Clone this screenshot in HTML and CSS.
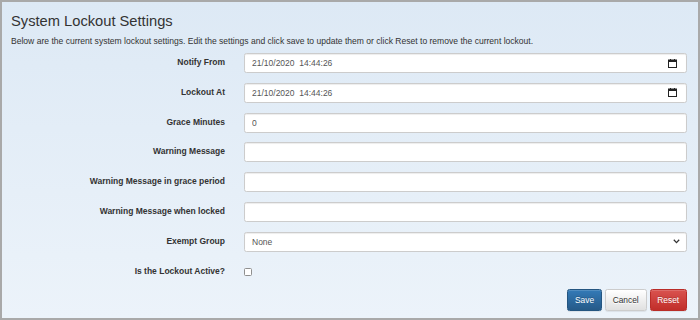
FILE: index.html
```html
<!DOCTYPE html>
<html lang="en">
<head>
    <meta charset="UTF-8">
    <meta name="viewport" content="width=device-width, initial-scale=1.0">
    <title>System Lockout Settings</title>
    <link rel="stylesheet" href="styles.css">
</head>
<body>
    <div class="panel">
        <h3 class="title">System Lockout Settings</h3>
        <p class="intro">Below are the current system lockout settings. Edit the settings and click save to update them or click Reset to remove the current lockout.</p>

        <form class="settings" action="#" method="POST">
            <div class="form-group">
                <label class="control-label">Notify From</label>
                <div class="form-control date">
                    <input type="text" name="notify_from" value="21/10/2020  14:44:26">
                    <svg class="cal-icon" width="9" height="9" viewBox="0 0 9 9">
                        <rect x="0.5" y="1" width="8" height="7.5" fill="none" stroke="#222" stroke-width="1"/>
                        <rect x="0.5" y="1" width="8" height="2" fill="#222"/>
                        <rect x="2" y="0" width="1" height="1.5" fill="#222"/>
                        <rect x="6" y="0" width="1" height="1.5" fill="#222"/>
                    </svg>
                </div>
            </div>
            <div class="form-group">
                <label class="control-label">Lockout At</label>
                <div class="form-control date">
                    <input type="text" name="lockout_at" value="21/10/2020  14:44:26">
                    <svg class="cal-icon" width="9" height="9" viewBox="0 0 9 9">
                        <rect x="0.5" y="1" width="8" height="7.5" fill="none" stroke="#222" stroke-width="1"/>
                        <rect x="0.5" y="1" width="8" height="2" fill="#222"/>
                        <rect x="2" y="0" width="1" height="1.5" fill="#222"/>
                        <rect x="6" y="0" width="1" height="1.5" fill="#222"/>
                    </svg>
                </div>
            </div>
            <div class="form-group">
                <label class="control-label">Grace Minutes</label>
                <div class="form-control">
                    <input type="text" name="grace_minutes" value="0">
                </div>
            </div>
            <div class="form-group">
                <label class="control-label">Warning Message</label>
                <div class="form-control">
                    <input type="text" name="warning_message">
                </div>
            </div>
            <div class="form-group">
                <label class="control-label">Warning Message in grace period</label>
                <div class="form-control">
                    <input type="text" name="warning_grace">
                </div>
            </div>
            <div class="form-group">
                <label class="control-label">Warning Message when locked</label>
                <div class="form-control">
                    <input type="text" name="warning_locked">
                </div>
            </div>
            <div class="form-group">
                <label class="control-label">Exempt Group</label>
                <div class="form-control select">
                    <select name="exempt_group">
                        <option>None</option>
                    </select>
                    <svg class="chevron" width="7" height="5" viewBox="0 0 7 5">
                        <path d="M0.8 0.8 L3.5 3.6 L6.2 0.8" fill="none" stroke="#333" stroke-width="1.3"/>
                    </svg>
                </div>
            </div>
            <div class="form-group check-row">
                <label class="control-label">Is the Lockout Active?</label>
                <div class="check-wrap">
                    <input type="checkbox" name="active">
                </div>
            </div>

            <div class="actions">
                <button type="submit" class="btn btn-primary">Save</button>
                <button type="button" class="btn btn-default">Cancel</button>
                <button type="button" class="btn btn-danger">Reset</button>
            </div>
        </form>
    </div>
</body>
</html>
```

FILE: styles.css
```css
* {
    margin: 0;
    padding: 0;
    box-sizing: border-box;
    font-family: 'Liberation Sans', Arial, Helvetica, sans-serif;
}

body {
    background: #ffffff;
}

.panel {
    width: 700px;
    height: 320px;
    border: 2px solid #a9a9a9;
    background: linear-gradient(to bottom, #dde9f5, #ecf3fa);
    padding: 10.6px 9px 0 9px;
    color: #333;
}

.title {
    font-size: 14.7px;
    line-height: 1.1;
    font-weight: normal;
    margin-bottom: 6px;
}

.intro {
    font-size: 8.55px;
    line-height: 12px;
    margin-bottom: 6.3px;
}

.settings {
    width: 676px;
}

.form-group {
    display: grid;
    grid-template-columns: 214px 443px;
    column-gap: 19px;
    margin-bottom: 9.8px;
    align-items: start;
}

.control-label {
    font-size: 8.5px;
    line-height: 12px;
    font-weight: bold;
    text-align: right;
    padding-top: 3px;
}

.form-control {
    height: 20px;
    display: flex;
    align-items: center;
    background: #fff;
    border: 1px solid #ccc;
    border-radius: 2.4px;
    box-shadow: inset 0 1px 1px rgba(0, 0, 0, 0.075);
    padding: 0 7px;
}

.form-control input,
.form-control select {
    flex: 1;
    border: none;
    outline: none;
    background: transparent;
    font-size: 8.5px;
    color: #555;
    height: 100%;
    appearance: none;
    -webkit-appearance: none;
}

.cal-icon {
    margin-right: 2px;
}

.chevron {
    margin-right: -1px;
}

.check-row {
    height: 18px;
}

.check-wrap {
    padding-top: 6.7px;
}

.check-wrap input {
    appearance: none;
    -webkit-appearance: none;
    display: block;
    width: 8px;
    height: 8px;
    border: 1px solid #8f8f8f;
    border-radius: 1.5px;
    background: #fff;
}

.actions {
    display: flex;
    justify-content: flex-end;
    gap: 3px;
}

.btn {
    font-size: 8.4px;
    line-height: 12px;
    padding: 3.6px 6.8px;
    border: 1px solid transparent;
    border-radius: 2.4px;
    cursor: pointer;
    box-shadow: inset 0 1px 0 rgba(255, 255, 255, 0.15), 0 1px 1px rgba(0, 0, 0, 0.075);
}

.btn-primary {
    color: #fff;
    background: linear-gradient(to bottom, #337ab7, #265a88);
    border-color: #245580;
    text-shadow: 0 -1px 0 rgba(0, 0, 0, 0.2);
}

.btn-default {
    color: #333;
    background: linear-gradient(to bottom, #fff, #e0e0e0);
    border-color: #ccc;
    text-shadow: 0 1px 0 #fff;
}

.btn-danger {
    color: #fff;
    background: linear-gradient(to bottom, #d9534f, #c12e2a);
    border-color: #b92c28;
    text-shadow: 0 -1px 0 rgba(0, 0, 0, 0.2);
}
```
